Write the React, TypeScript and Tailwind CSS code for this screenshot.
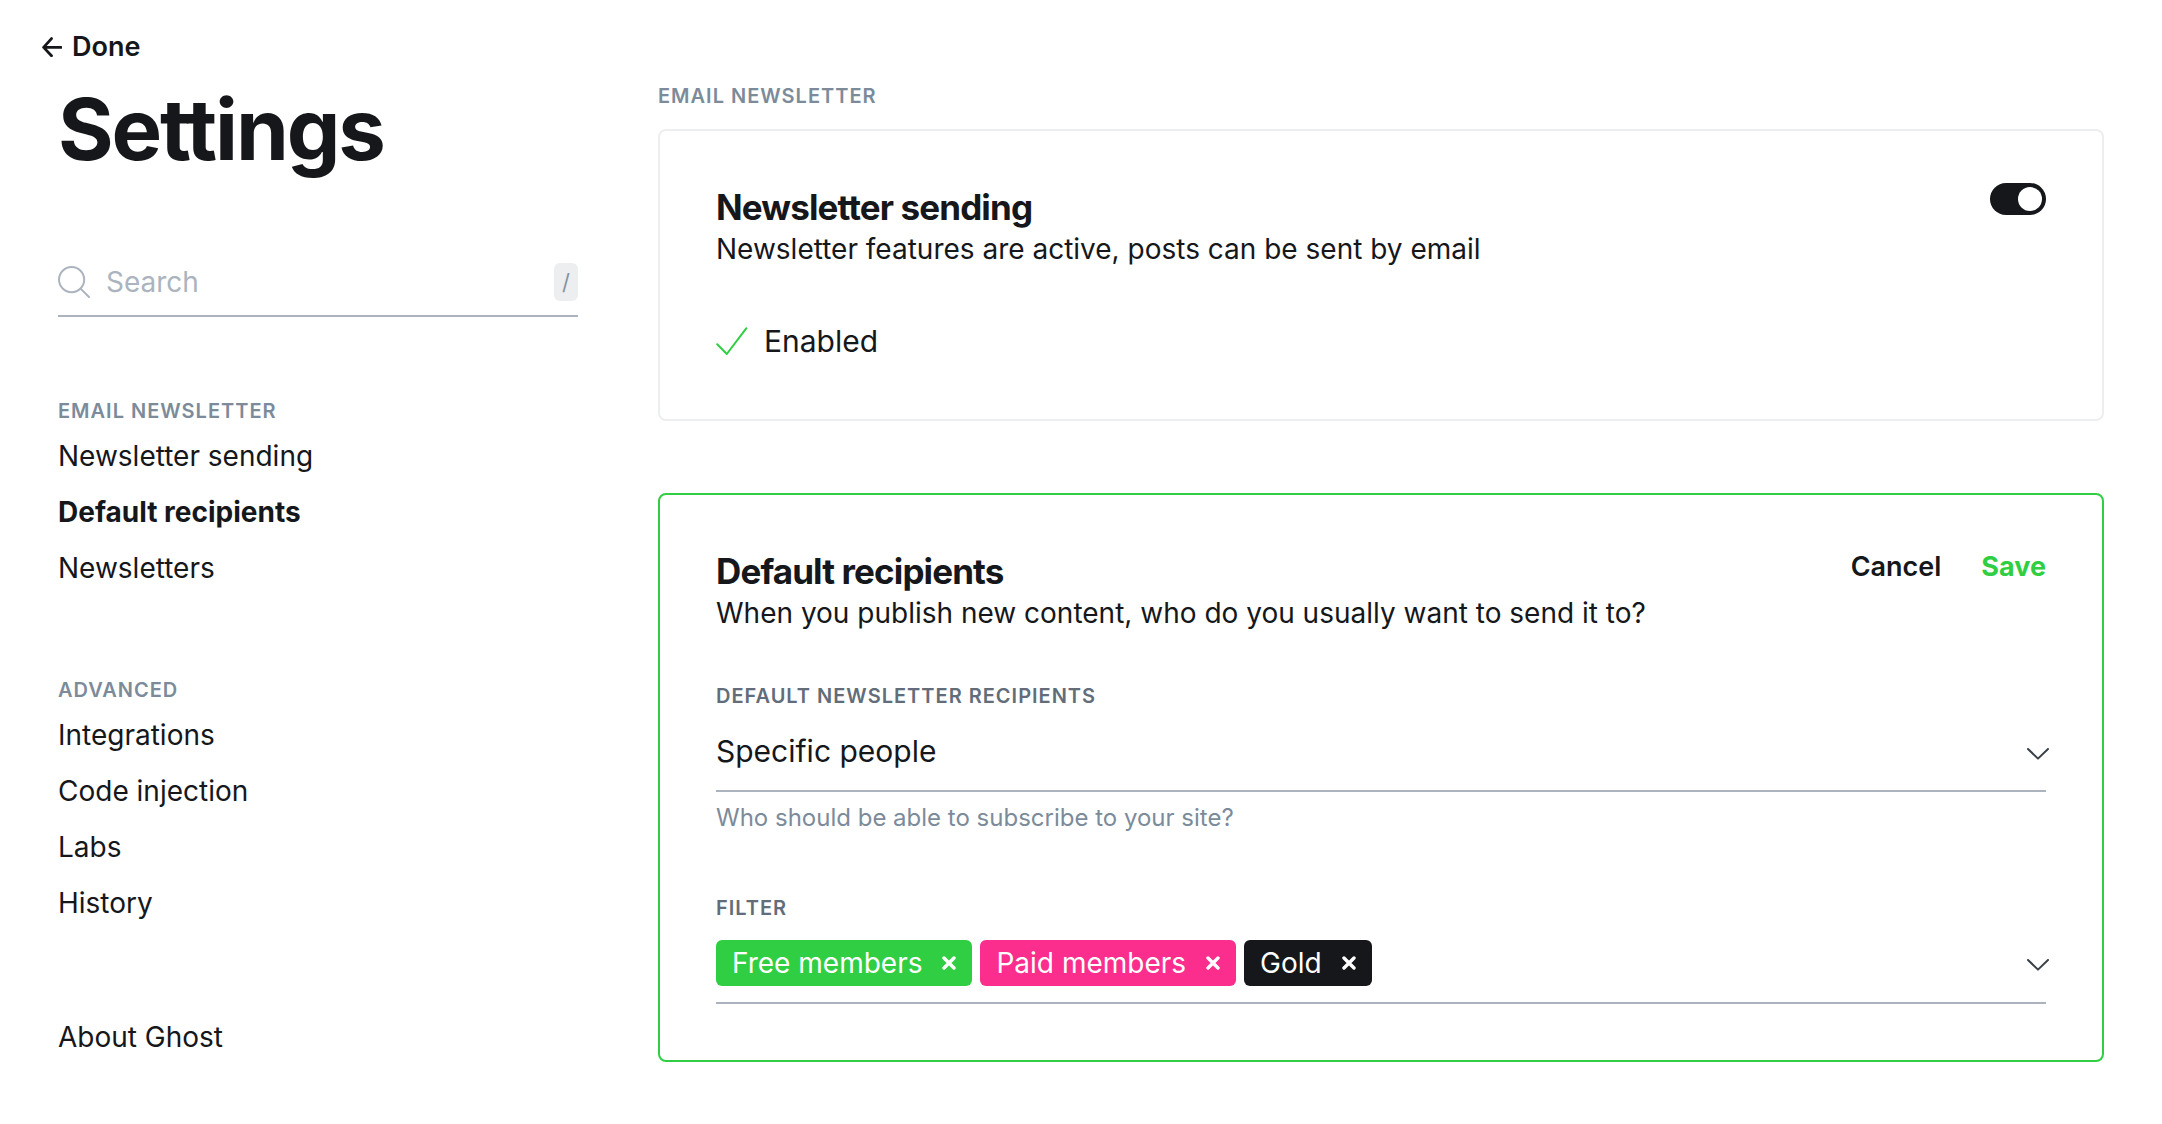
import { useState } from "react";

interface NavSection {
  title: string;
  items: string[];
}

interface Filter {
  name: string;
  className: string;
}

const NAV_SECTIONS: NavSection[] = [
  { title: "Email newsletter", items: ["Newsletter sending", "Default recipients", "Newsletters"] },
  { title: "Advanced", items: ["Integrations", "Code injection", "Labs", "History"] },
];

const FILTERS: Filter[] = [
  { name: "Free members", className: "bg-[#30cf43]" },
  { name: "Paid members", className: "bg-[#fb2d8d]" },
  { name: "Gold", className: "bg-[#15171a]" },
];

function ChevronIcon() {
  return (
    <svg viewBox="0 0 22 12" fill="none" stroke="#394047" strokeWidth="2" strokeLinecap="round" strokeLinejoin="round" className="mt-1 h-3 w-[22px]">
      <path d="M1 1l10 9.6L21 1" />
    </svg>
  );
}

function NavItem({ label, active }: { label: string; active?: boolean }) {
  return (
    <li>
      <a href="#" className={`block leading-[56px] ${active ? "font-bold" : ""}`}>
        {label}
      </a>
    </li>
  );
}

function Sidebar() {
  return (
    <aside className="w-[578px] shrink-0 pl-[58px] pt-[30px]">
      <a href="#" className="-ml-4 flex w-fit items-center gap-2.5 text-[27px] font-semibold leading-[34px]">
        <svg viewBox="0 0 20 20" fill="none" stroke="currentColor" strokeWidth="2.8" strokeLinecap="round" strokeLinejoin="round" className="size-5">
          <path d="M9.5 1.6L1.6 10.4l7.9 8.4M1.8 10.4H19" />
        </svg>
        Done
      </a>
      <h1 className="mt-6 text-[85px] font-bold leading-[84px] tracking-tight">Settings</h1>

      <div className="mt-[77px] flex h-[68px] items-center gap-4 border-b-2 border-[#abb4be]">
        <svg viewBox="0 0 32 32" fill="none" stroke="#abb4be" strokeWidth="2" strokeLinecap="round" className="size-8 shrink-0">
          <circle cx="13.6" cy="13.6" r="12.6" />
          <path d="M22.6 22.6L31 31" />
        </svg>
        <input
          type="search"
          aria-label="Search settings"
          placeholder="Search"
          className="min-w-0 flex-1 bg-transparent outline-none placeholder:text-[#abb4be]"
        />
        <kbd className="flex h-[38px] w-6 items-center justify-center rounded-md bg-[#eceef0] font-[Inter,sans-serif] text-[22px] text-[#8594a1]">/</kbd>
      </div>

      <nav className="mt-[82px]">
        {NAV_SECTIONS.map((section) => (
          <section key={section.title} className="mb-[82px] last-of-type:mb-[78px]">
            <h2 className="mb-[5px] text-xl font-semibold uppercase leading-6 tracking-wider text-[#7c8b9a]">{section.title}</h2>
            <ul>
              {section.items.map((item) => (
                <NavItem key={item} label={item} active={item === "Default recipients"} />
              ))}
            </ul>
          </section>
        ))}
        <ul>
          <NavItem label="About Ghost" />
        </ul>
      </nav>
    </aside>
  );
}

function CardHeading({ title, description }: { title: string; description: string }) {
  return (
    <div>
      <h3 className="text-[35px] font-bold leading-10 tracking-tight">{title}</h3>
      <p className="leading-[45px]">{description}</p>
    </div>
  );
}

export default function App() {
  const [enabled, setEnabled] = useState(true);
  const [filters, setFilters] = useState(FILTERS);

  return (
    <div className="flex min-h-screen gap-20 bg-white pr-[58px] font-[Inter,sans-serif] text-[28px] text-[#15171a] antialiased">
      <Sidebar />

      <main className="min-w-0 flex-1 pt-[84px]">
        <h2 className="mb-[21px] text-xl font-semibold uppercase leading-6 tracking-wider text-[#7c8b9a]">Email newsletter</h2>

        <div className="flex flex-col gap-[72px]">
          <section className="flex flex-col gap-12 rounded-lg border-2 border-[#eceef0] p-14">
            <div className="flex items-start justify-between">
              <CardHeading title="Newsletter sending" description="Newsletter features are active, posts can be sent by email" />
              <input
                type="checkbox"
                role="switch"
                aria-label="Newsletter sending"
                checked={enabled}
                onChange={(e) => setEnabled(e.target.checked)}
                className="-mt-1 flex h-8 w-14 appearance-none rounded-full bg-[#abb4be] p-1 before:size-6 before:rounded-full before:bg-white checked:justify-end checked:bg-[#15171a]"
              />
            </div>
            <div className="flex items-center gap-4 text-3xl leading-[43px]">
              <svg viewBox="0 0 32 32" fill="none" stroke="#30cf43" strokeWidth="2" strokeLinecap="round" strokeLinejoin="round" className="size-8">
                <path d="M1.2 18.2L10.8 28 30.4 2.2" />
              </svg>
              Enabled
            </div>
          </section>

          <section className="flex flex-col gap-12 rounded-lg border-2 border-[#30cf43] p-14">
            <div className="flex items-start justify-between">
              <CardHeading title="Default recipients" description="When you publish new content, who do you usually want to send it to?" />
              <div className="flex gap-10 text-[27px] leading-8">
                <button type="button" className="font-semibold">
                  Cancel
                </button>
                <button type="button" className="font-bold text-[#30cf43]">
                  Save
                </button>
              </div>
            </div>

            <div className="flex flex-col gap-[60px]">
              <div>
                <label htmlFor="recipients" className="mb-1 block text-xl font-semibold uppercase leading-6 tracking-wider text-[#626d79]">
                  Default newsletter recipients
                </label>
                <div className="relative">
                  <select id="recipients" className="block h-20 w-full appearance-none border-b-2 border-[#abb4be] bg-transparent text-3xl outline-none">
                    <option>Specific people</option>
                    <option>Whoever has access to the post</option>
                    <option>All members</option>
                    <option>Usually nobody</option>
                  </select>
                  <span className="pointer-events-none absolute inset-y-0 -right-[3px] flex items-center">
                    <ChevronIcon />
                  </span>
                </div>
                <p className="mt-2 text-2xl leading-9 text-[#7c8b9a]">Who should be able to subscribe to your site?</p>
              </div>

              <div role="group" aria-labelledby="filter-label">
                <h4 id="filter-label" className="mb-1 text-xl font-semibold uppercase leading-6 tracking-wider text-[#626d79]">
                  Filter
                </h4>
                <div className="flex h-20 items-center gap-2 border-b-2 border-[#abb4be]">
                  {filters.map((filter) => (
                    <span key={filter.name} className={`flex h-[46px] items-center gap-5 rounded-md px-4 text-white ${filter.className}`}>
                      {filter.name}
                      <button
                        type="button"
                        aria-label={`Remove ${filter.name}`}
                        onClick={() => setFilters(filters.filter((f) => f.name !== filter.name))}
                      >
                        <svg viewBox="0 0 14 14" stroke="currentColor" strokeWidth="3.4" strokeLinecap="round" className="size-3.5">
                          <path d="M2 2l10 10M12 2L2 12" />
                        </svg>
                      </button>
                    </span>
                  ))}
                  <button type="button" aria-label="Show filters" className="-mr-[3px] ml-auto">
                    <ChevronIcon />
                  </button>
                </div>
              </div>
            </div>
          </section>
        </div>
      </main>
    </div>
  );
}
